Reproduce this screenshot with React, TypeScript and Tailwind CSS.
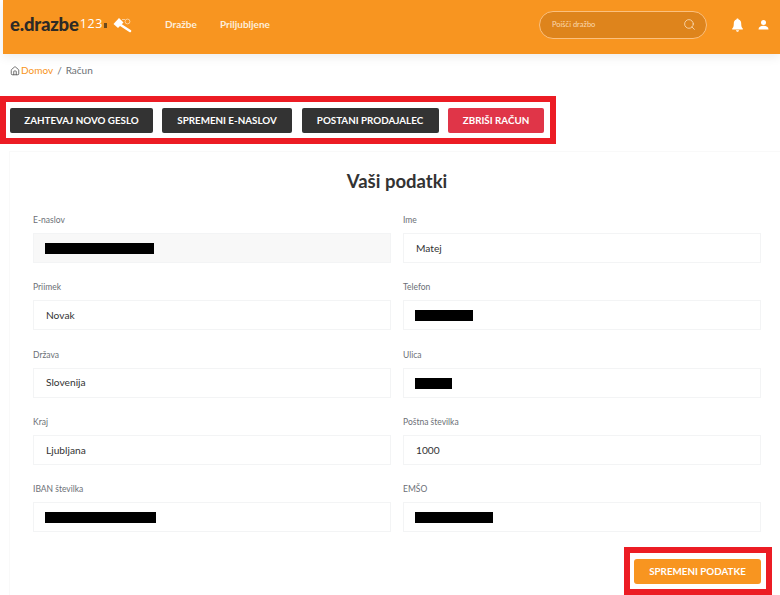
import React from 'react';
import { Search, Home } from 'lucide-react';

const fields: { label: string; value?: string; redact?: number; disabled?: boolean }[] = [
  { label: 'E-naslov', redact: 109, disabled: true },
  { label: 'Ime', value: 'Matej' },
  { label: 'Priimek', value: 'Novak' },
  { label: 'Telefon', redact: 58 },
  { label: 'Država', value: 'Slovenija' },
  { label: 'Ulica', redact: 37 },
  { label: 'Kraj', value: 'Ljubljana' },
  { label: 'Poštna številka', value: '1000' },
  { label: 'IBAN številka', redact: 111 },
  { label: 'EMŠO', redact: 78 },
];

const Gavel = () => (
  <svg width="19" height="16" viewBox="0 0 19 16" fill="none" className="ml-[5px]">
    <path d="M0.5 7 L6 1 L10.5 5.5 L5 11 Z" fill="#fff" />
    <path d="M7 7.5 L17 14" stroke="#fff" strokeWidth="2.6" strokeLinecap="round" />
    <circle cx="14.5" cy="4.5" r="2.4" stroke="#fff" strokeOpacity="0.55" strokeWidth="1" />
    <path d="M9 2.5 L12 2.5" stroke="#fff" strokeOpacity="0.55" />
  </svg>
);

const BellIcon = () => (
  <svg width="11" height="14" viewBox="0 0 11 14" fill="#fff">
    <path d="M5.5 0.5 C6.2 0.5 6.6 1 6.6 1.6 C8.4 2.1 9.2 3.6 9.2 5.4 C9.2 8 9.7 9.4 10.8 10.6 L10.8 11.4 L0.2 11.4 L0.2 10.6 C1.3 9.4 1.8 8 1.8 5.4 C1.8 3.6 2.6 2.1 4.4 1.6 C4.4 1 4.8 0.5 5.5 0.5 Z" />
    <path d="M4 12.2 L7 12.2 C7 13.1 6.3 13.7 5.5 13.7 C4.7 13.7 4 13.1 4 12.2 Z" />
  </svg>
);

const PersonIcon = () => (
  <svg width="11" height="10" viewBox="0 0 11 10" fill="#fff">
    <circle cx="5.5" cy="2.6" r="2.5" />
    <path d="M0.5 9.6 C0.5 7 2.5 5.8 5.5 5.8 C8.5 5.8 10.5 7 10.5 9.6 Z" />
  </svg>
);

const Field = ({ label, value, redact, disabled }: (typeof fields)[number]) => (
  <div className="h-[67.3px]">
    <div className="h-[14px] pt-[1px] text-[8.5px] leading-[14px] text-[#6b6f76]">{label}</div>
    <div
      className={`mt-[7px] flex h-[30px] items-center border border-[#f3f4f5] pl-[12px] pt-[1px] text-[10.2px] text-[#333] ${disabled ? 'bg-[#f8f8f8]' : 'bg-white'}`}
    >
      {redact ? <div className="h-[11px] bg-black -ml-[1px]" style={{ width: redact }} /> : value}
    </div>
  </div>
);

export default function App() {
  return (
    <div className="h-[595px] w-[780px] overflow-hidden bg-white font-['Lato','Noto_Sans',sans-serif]">
      <header className="ml-[3px] flex h-[54px] items-center bg-[#f89520] pb-[5px] pl-[7px] pr-[11px] shadow-[0_3px_10px_rgba(0,0,0,0.08)]">
        <div className="flex w-[155px] items-center">
          <span className="text-[18.5px] leading-none font-black tracking-[-0.2px] text-[#2d2a26]">e.drazbe</span>
          <span className="ml-[1px] font-['Open_Sans'] text-[12.5px] leading-none tracking-[0.6px] text-white">123</span>
          <svg width="4" height="6" viewBox="0 0 4 6" className="ml-[1px]">
            <rect width="3" height="5" y="1" fill="#6b4a1c" />
          </svg>
          <Gavel />
        </div>
        <nav className="flex gap-[23px] text-[10px] font-bold text-[#fdeedb]">
          <span>Dražbe</span>
          <span>Priljubljene</span>
        </nav>
        <div className="ml-auto flex items-center">
          <div className="flex h-[28px] w-[168px] items-center justify-between rounded-full border border-[#fbc07f] bg-[#de841c] pl-[12px] pr-[10px] text-[7.5px] text-[#fbd9b0]">
            <span>Poišči dražbo</span>
            <Search size={13} strokeWidth={1.4} className="text-[#fde4c6]" />
          </div>
          <div className="ml-[25px]">
            <BellIcon />
          </div>
          <div className="ml-[15px]">
            <PersonIcon />
          </div>
        </div>
      </header>

      <div className="flex h-[33px] items-center pl-[10px] text-[10px] text-[#6b7075]">
        <Home size={10} className="mr-[1px] text-[#555]" />
        <span className="text-[#f89520]">Domov</span>
        <span className="mx-[4px]">/</span>
        <span>Račun</span>
      </div>

      <div className="mt-[9px] flex h-[48px] w-[556px] items-center gap-[9.5px] border-[6px] border-[#ec1c24] pl-[4px] text-[9.8px] font-bold text-white">
        <button className="h-[25px] w-[143px] rounded-[2px] bg-[#333]">ZAHTEVAJ NOVO GESLO</button>
        <button className="-ml-[0.5px] h-[25px] w-[130px] rounded-[2px] bg-[#333]">SPREMENI E-NASLOV</button>
        <button className="h-[25px] w-[137px] rounded-[2px] bg-[#333]">POSTANI PRODAJALEC</button>
        <button className="h-[25px] w-[96px] rounded-[2px] bg-[#e03548]">ZBRIŠI RAČUN</button>
      </div>

      <main className="ml-[9px] mt-[7px] border-l border-t border-[#f9f9f9] pl-[23px] pr-[19px]">
        <h1 className="pt-[17px] text-center text-[18.5px] leading-[24px] font-bold text-[#333]">Vaši podatki</h1>
        <div className="mt-[19px] grid grid-cols-[358px_358px] gap-x-[12px]">
          {fields.map((f) => (
            <Field key={f.label} {...f} />
          ))}
        </div>
        <div className="-mr-[11px] -mt-[1px] ml-auto flex h-[48px] w-[148px] items-center justify-center border-[6px] border-[#ec1c24] pr-[1px]">
          <button className="h-[25px] w-[127px] rounded-[3px] bg-[#f89520] text-[9.8px] font-bold text-white">
            SPREMENI PODATKE
          </button>
        </div>
      </main>
    </div>
  );
}
